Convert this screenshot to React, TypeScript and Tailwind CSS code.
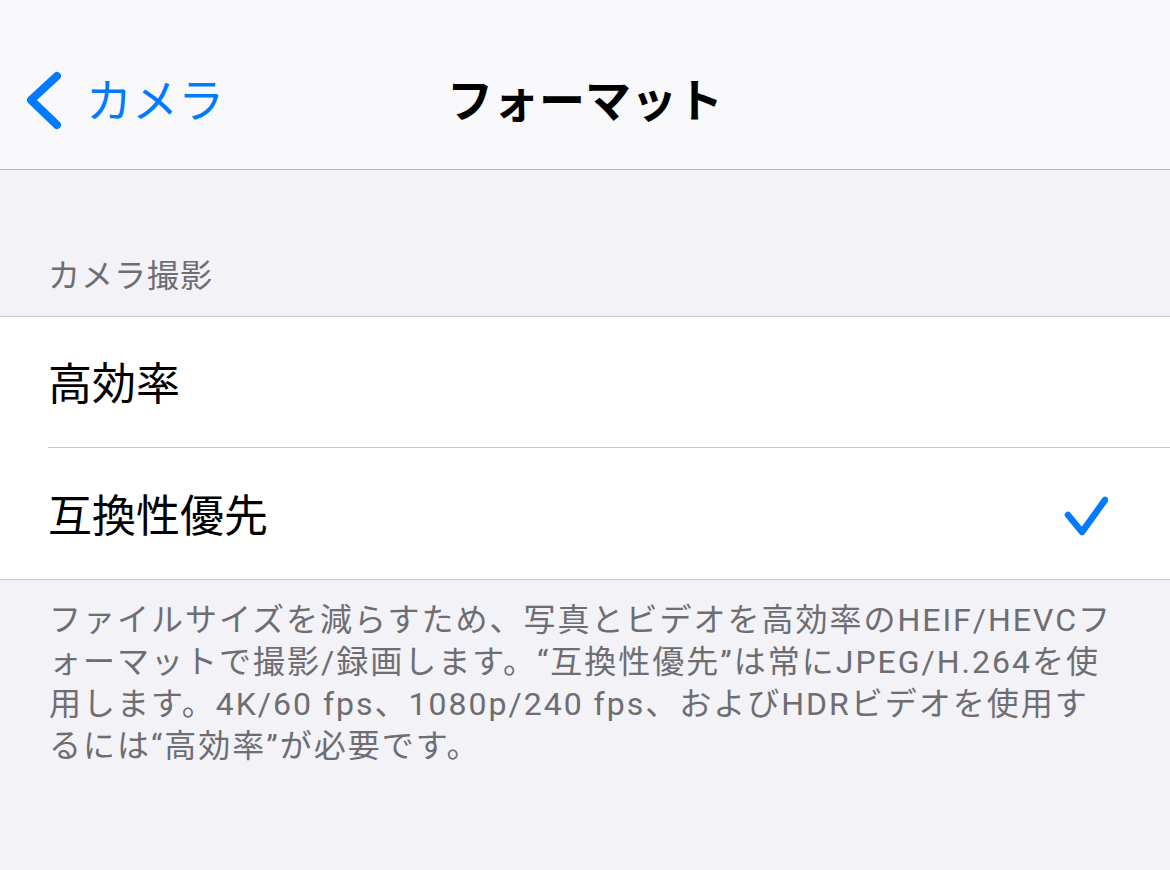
const jp = "font-['Roboto','Noto_Sans_CJK_JP',sans-serif]";

const lines = [
  "ファイルサイズを減らすため、写真とビデオを高効率のHEIF/HEVCフ",
  "ォーマットで撮影/録画します。“互換性優先”は常にJPEG/H.264を使",
  "用します。4K/60 fps、1080p/240 fps、およびHDRビデオを使用す",
  "るには“高効率”が必要です。",
];

const Row = ({ label, checked, last }: { label: string; checked?: boolean; last?: boolean }) => (
  <div className="pl-[48px] bg-white">
    <div
      className={`h-[131px] flex items-center justify-between pr-[64px] ${
        last ? "" : "border-b border-[#c8c7cc]"
      }`}
    >
      <span className="text-[44px] leading-none text-black pt-[6px]">{label}</span>
      {checked && (
        <svg width="44" height="44" viewBox="0 0 44 44" className="mt-[8px] -mr-[2px]">
          <path
            d="M4 19 L18 36 L41 4"
            fill="none"
            stroke="#007aff"
            strokeWidth="6.5"
            strokeLinecap="round"
            strokeLinejoin="round"
          />
        </svg>
      )}
    </div>
  </div>
);

export default function App() {
  return (
    <div className={`w-[1170px] h-[870px] bg-[#f2f2f7] overflow-hidden ${jp}`}>
      {/* nav bar */}
      <div className="relative h-[170px] bg-[#f9f9fb] border-b border-[#b2b2b2] flex items-center pt-[32px]">
        <div className="flex items-center pl-[26px]">
          <svg width="38" height="60" viewBox="0 0 38 60">
            <path
              d="M31 5 L5 29 L31 54"
              fill="none"
              stroke="#007aff"
              strokeWidth="8"
              strokeLinecap="round"
              strokeLinejoin="round"
            />
          </svg>
          <span className="ml-[22px] text-[46px] leading-none text-[#007aff]">カメラ</span>
        </div>
        <div className="absolute inset-x-0 top-0 h-[170px] flex items-center justify-center pointer-events-none pt-[32px]">
          <span className="text-[46px] leading-none font-bold text-black">フォーマット</span>
        </div>
      </div>

      {/* section header */}
      <div className="h-[146px] flex items-end pl-[48px] pb-[20px]">
        <span className="text-[32px] leading-[40px] tracking-[1px] text-[#6d6d72]">カメラ撮影</span>
      </div>

      {/* rows */}
      <div className="border-t border-b border-[#c8c7cc]">
        <Row label="高効率" />
        <Row label="互換性優先" checked last />
      </div>

      {/* footer */}
      <div className="pl-[49px] pt-[19px] text-[32px] leading-[42px] tracking-[2px] text-[#6d6d72]">
        {lines.map((l) => (
          <div key={l} className="whitespace-nowrap">
            {l}
          </div>
        ))}
      </div>
    </div>
  );
}
